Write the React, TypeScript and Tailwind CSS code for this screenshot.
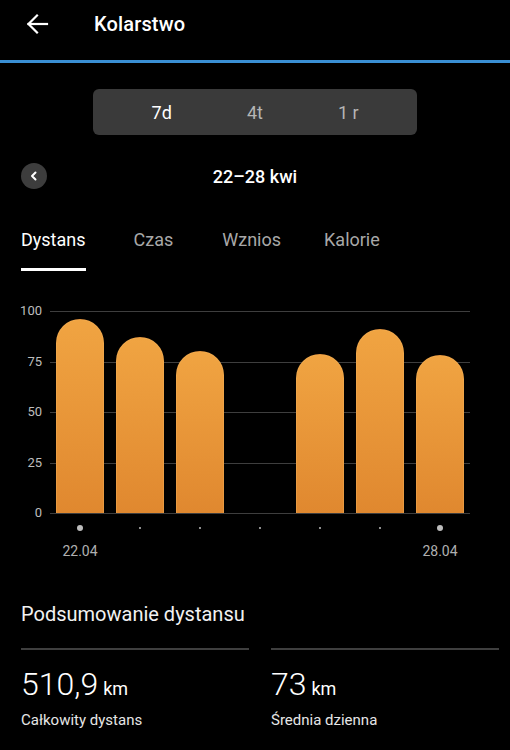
import React from "react";

const values = [96, 87, 80, 0, 78.5, 91, 78];
const ticks = [100, 75, 50, 25, 0];
const PX = 2.02;

export default function App() {
  return (
    <div
      className="w-[510px] h-[750px] bg-black text-white overflow-hidden"
      style={{ fontFamily: "Roboto, 'Noto Sans', sans-serif" }}
    >
      {/* Header */}
      <div className="h-[48px] flex items-center">
        <div className="w-[94px] pl-[25px] flex items-center">
          <svg width="24" height="24" viewBox="0 0 24 24" fill="none" stroke="white" strokeWidth="2.2" strokeLinecap="square">
            <path d="M22 12H3.5" />
            <path d="M12 3.5L3.5 12L12 20.5" />
          </svg>
        </div>
        <div className="text-[20px] font-medium tracking-[0.15px]">Kolarstwo</div>
      </div>
      <div className="mt-[12px] h-[3px] bg-[#3a8fd4]" />

      {/* Segmented control */}
      <div className="mt-[26px] mx-auto w-[324px] h-[46px] rounded-[6px] bg-[#3a3a3a] px-[22px] flex items-center">
        <div className="flex-1 text-center text-[18px] text-white">7d</div>
        <div className="flex-1 text-center text-[18px] text-[#b5b5b5]">4t</div>
        <div className="flex-1 text-center text-[18px] text-[#b5b5b5]">1 r</div>
      </div>

      {/* Date row */}
      <div className="mt-[28px] h-[26px] relative flex items-center justify-center">
        <div className="absolute left-[21px] top-0 w-[26px] h-[26px] rounded-full bg-[#3d3d3d] flex items-center justify-center">
          <svg width="12" height="12" viewBox="0 0 12 12" fill="none" stroke="white" strokeWidth="2" strokeLinecap="round" strokeLinejoin="round">
            <path d="M7.5 2.5L4 6L7.5 9.5" />
          </svg>
        </div>
        <div className="text-[18px] font-medium">22–28 kwi</div>
      </div>

      {/* Tabs */}
      <div className="mt-[39px] px-[21px] flex text-[18px]">
        <div className="flex flex-col">
          <div className="h-[24px] leading-[24px] text-white">Dystans</div>
          <div className="mt-[16px] h-[3px] bg-white" />
        </div>
        <div className="ml-[48px] h-[24px] leading-[24px] text-[#a8a8a8]">Czas</div>
        <div className="ml-[49px] h-[24px] leading-[24px] text-[#a8a8a8]">Wznios</div>
        <div className="ml-[43px] h-[24px] leading-[24px] text-[#a8a8a8]">Kalorie</div>
      </div>

      {/* Chart */}
      <div className="mt-[40px] flex">
        <div className="w-[50px] h-[202px] relative">
          {ticks.map((t) => (
            <div
              key={t}
              className="absolute right-[8px] text-[13px] leading-[16px] text-[#bdbdbd] -translate-y-1/2"
              style={{ top: (100 - t) * PX }}
            >
              {t}
            </div>
          ))}
        </div>
        <div className="w-[420px]">
          <div className="relative h-[202px]">
            {ticks.map((t) => (
              <div
                key={t}
                className="absolute left-0 right-0 h-px bg-[#3e3e3e]"
                style={{ top: (100 - t) * PX }}
              />
            ))}
            <div className="absolute inset-0 flex items-end">
              {values.map((v, i) => (
                <div key={i} className="w-[60px] flex justify-center items-end h-full">
                  {v > 0 && (
                    <div
                      className="w-[48px] rounded-t-[24px] bg-gradient-to-b from-[#f0a442] to-[#e0882f] border border-[#f3b25c]/40 border-b-0"
                      style={{ height: v * PX }}
                    />
                  )}
                </div>
              ))}
            </div>
          </div>
          <div className="flex mt-[12px] h-[5px] items-center">
            {values.map((_, i) => (
              <div key={i} className="w-[60px] flex justify-center">
                {i === 0 || i === 6 ? (
                  <div className="w-[6px] h-[6px] rounded-full bg-[#bdbdbd]" />
                ) : (
                  <div className="w-[2px] h-[2px] rounded-full bg-[#bdbdbd]" />
                )}
              </div>
            ))}
          </div>
          <div className="flex mt-[13px] text-[14px] text-[#b0b0b0] leading-[16px]">
            <div className="w-[60px] text-center">22.04</div>
            <div className="flex-1" />
            <div className="w-[60px] text-center">28.04</div>
          </div>
        </div>
      </div>

      {/* Summary */}
      <div className="mt-[43px] px-[21px] text-[20px] leading-[24px] text-[#f2f2f2]">
        Podsumowanie dystansu
      </div>
      <div className="mt-[22px] pl-[21px] pr-[11px] flex gap-[22px]">
        <div className="flex-1">
          <div className="h-[2px] bg-[#3f3f3f]" />
          <div className="mt-[16px] flex items-baseline">
            <span className="text-[32px] font-light leading-[36px]">510,9</span>
            <span className="ml-[5px] text-[18px]">km</span>
          </div>
          <div className="mt-[7px] text-[15px] text-[#e6e6e6]">Całkowity dystans</div>
        </div>
        <div className="flex-1">
          <div className="h-[2px] bg-[#3f3f3f]" />
          <div className="mt-[16px] flex items-baseline">
            <span className="text-[32px] font-light leading-[36px]">73</span>
            <span className="ml-[5px] text-[18px]">km</span>
          </div>
          <div className="mt-[7px] text-[15px] text-[#e6e6e6]">Średnia dzienna</div>
        </div>
      </div>
    </div>
  );
}
